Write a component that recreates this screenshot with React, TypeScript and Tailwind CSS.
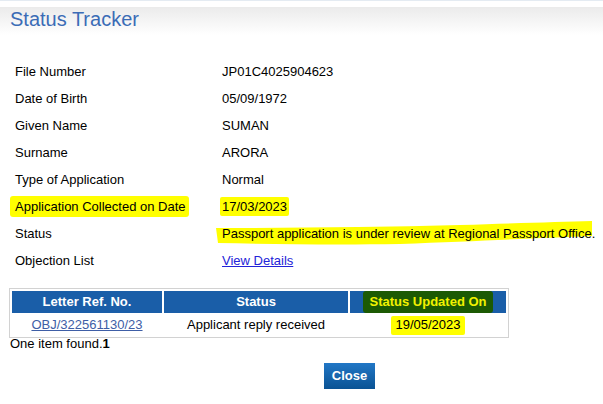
import React from "react";

const rows: { label: string; value: React.ReactNode; hl?: boolean }[] = [
  { label: "File Number", value: "JP01C4025904623" },
  { label: "Date of Birth", value: "05/09/1972" },
  { label: "Given Name", value: "SUMAN" },
  { label: "Surname", value: "ARORA" },
  { label: "Type of Application", value: "Normal" },
];

export default function App() {
  return (
    <div
      className="w-[603px] h-[404px] bg-white text-[13px] text-black overflow-hidden"
      style={{ fontFamily: '"Liberation Sans", Arial, sans-serif' }}
    >
      <div className="h-px bg-[#e4ebf2]" />
      <div className="h-[6px]" />
      <div className="h-[28px] bg-gradient-to-b from-[#ebebeb] to-white pl-[10px] flex items-start">
        <span className="text-[20px] leading-[24px] text-[#3b6cb6]">Status Tracker</span>
      </div>
      <div className="h-[23px]" />
      <div className="flex flex-col">
        {rows.map((r) => (
          <div key={r.label} className="h-[27px] flex items-center">
            <div className="w-[222px] pl-[15px]">{r.label}</div>
            <div>{r.value}</div>
          </div>
        ))}
        <div className="h-[27px] flex items-center">
          <div className="w-[222px] pl-[10px]">
            <span className="bg-[#ffff00] pl-[5px] pr-[3px] py-[3px] rounded-[3px]">
              Application Collected on Date
            </span>
          </div>
          <div className="-ml-[2px]">
            <span className="bg-[#ffff00] pl-[2px] pr-[2px] py-[2px] rounded-[2px]">17/03/2023</span>
          </div>
        </div>
        <div className="h-[27px] flex items-center relative">
          <svg className="absolute left-0 top-0" width="603" height="27" viewBox="0 0 603 27">
            <path
              d="M216 8 C 300 8, 380 7, 460 5 C 520 3, 560 2, 592 1 L 592 16 C 540 18, 480 21, 400 24 C 330 25, 270 24, 218 23 Z"
              fill="#ffff00"
            />
          </svg>
          <div className="w-[222px] pl-[15px] relative">Status</div>
          <div className="relative">Passport application is under review at Regional Passport Office.</div>
        </div>
        <div className="h-[27px] flex items-center">
          <div className="w-[222px] pl-[15px]">Objection List</div>
          <a className="text-[#2323d8] underline">View Details</a>
        </div>
      </div>
      <div className="h-[14px]" />
      <div className="pl-[9px]">
        <table className="w-[500px] border border-[#d2d2d2] border-separate border-spacing-[2px]">
          <thead>
            <tr className="h-[22px]">
              <th className="w-[150px] bg-[#1a5ea8] text-white font-bold p-0">Letter Ref. No.</th>
              <th className="w-[184px] bg-[#1a5ea8] text-white font-bold p-0">Status</th>
              <th className="w-[156px] bg-[#1a5ea8] font-bold p-0">
                <span className="bg-[#1c5a04] text-[#f2f200] px-[6px] pt-[3px] pb-[4px] rounded-[3px]">
                  Status Updated On
                </span>
              </th>
            </tr>
          </thead>
          <tbody>
            <tr className="h-[19px]">
              <td className="text-center p-0">
                <a className="text-[#3e5ea6] underline">OBJ/322561130/23</a>
              </td>
              <td className="text-center p-0">Applicant reply received</td>
              <td className="text-center p-0">
                <span className="bg-[#ffff00] px-[4px] pt-[1px] pb-[3px] rounded-[2px]">19/05/2023</span>
              </td>
            </tr>
          </tbody>
        </table>
      </div>
      <div className="pl-[10px] leading-[16px] -mt-[2px]">
        One item found.<b>1</b>
      </div>
      <div className="h-[11px]" />
      <div className="pl-[324px]">
        <button className="w-[51px] h-[26px] bg-gradient-to-b from-[#2177c6] to-[#0a5394] text-white font-bold text-[13px]">
          Close
        </button>
      </div>
    </div>
  );
}
